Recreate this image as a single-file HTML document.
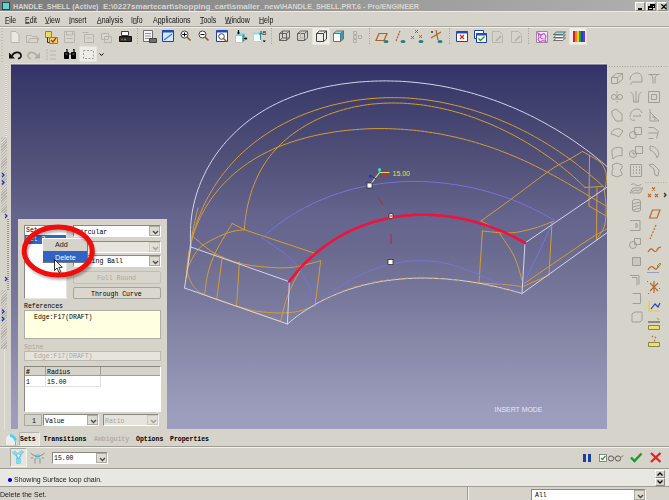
<!DOCTYPE html>
<html><head><meta charset="utf-8">
<style>
*{margin:0;padding:0;box-sizing:border-box}
html,body{width:669px;height:500px;overflow:hidden;background:#d6d3ca}
body{position:relative;font-family:"Liberation Sans",sans-serif;color:#000}
.a{position:absolute}
.t{position:absolute;white-space:nowrap;line-height:1}
.mono{font-family:"Liberation Mono",monospace;font-size:6.5px;margin-top:1px}
#title{left:0;top:0;width:669px;height:11px;background:linear-gradient(to right,#7c7c7c,#9a9a9a 55%,#b0b0b0)}
#gfx{left:11px;top:64px;width:596px;height:365px;background:linear-gradient(rgb(50,50,104) 0px,rgb(57,57,106) 16px,rgb(82,82,122) 101px,rgb(92,92,132) 131px,rgb(100,100,142) 151px,rgb(106,106,144) 186px,rgb(114,114,150) 211px,rgb(122,122,158) 241px,rgb(130,130,164) 261px,rgb(136,136,168) 281px,rgb(142,142,176) 303px,rgb(148,148,180) 321px,rgb(156,156,188) 348px,rgb(157,157,190) 365px)}
u{text-underline-offset:0px;text-decoration-thickness:0.8px;text-decoration-color:#666}
.menu span{position:absolute;top:15.3px;font-size:8.8px;line-height:10px;color:#101010;transform-origin:0 0;transform:scaleX(.79)}
.sunk{border-top:1px solid #8a8880;border-left:1px solid #8a8880;border-bottom:1px solid #fff;border-right:1px solid #fff}
.raised{border-top:1px solid #fff;border-left:1px solid #fff;border-bottom:1px solid #8a8880;border-right:1px solid #8a8880}
.dd{position:absolute;top:0;right:0;bottom:0;width:11px;background:#dedbd2;border:1px solid #aeaba2}

</style></head><body>

<!-- title bar -->
<div class="a" id="title"></div>
<div class="a" style="left:2px;top:2px;width:8px;height:8px;background:#5ad6d6;border:1px solid #2a4848"></div>
<svg class="a" style="left:0;top:0" width="430" height="12" viewBox="0 0 430 12"><g font-family="Liberation Sans" font-weight="bold" font-size="8" fill="#d8d6d0" lengthAdjust="spacingAndGlyphs">
<text x="13" y="8.7" textLength="85.5" lengthAdjust="spacingAndGlyphs">HANDLE_SHELL (Active)</text>
<text x="103" y="8.7" textLength="179" lengthAdjust="spacingAndGlyphs">E:\0227smartecart\shopping_cart\smaller_new\</text>
<text x="282" y="8.7" textLength="137" lengthAdjust="spacingAndGlyphs">HANDLE_SHELL.PRT.6 - Pro/ENGINEER</text>
</g></svg>
<div class="a raised" style="left:635px;top:2px;width:10px;height:9px;background:#d6d3ca"><div class="a" style="left:2px;top:5px;width:4px;height:1.5px;background:#000"></div></div>
<div class="a raised" style="left:646px;top:2px;width:10px;height:9px;background:#d6d3ca"><div class="a" style="left:3px;top:1px;width:5px;height:4px;border:1px solid #000;border-top-width:2px"></div><div class="a" style="left:1px;top:3px;width:5px;height:4px;border:1px solid #000;border-top-width:2px;background:#d6d3ca"></div></div>
<div class="a raised" style="left:657px;top:2px;width:10px;height:9px;background:#d6d3ca"><div class="t" style="left:1.5px;top:0px;font-size:9px;font-weight:bold">&#x2715;</div></div>
<div class="a" style="left:0;top:11px;width:669px;height:1px;background:#ecebe4"></div>

<!-- menu bar -->
<div class="menu">
<span style="left:5px"><u>F</u>ile</span>
<span style="left:25px"><u>E</u>dit</span>
<span style="left:45px"><u>V</u>iew</span>
<span style="left:69px"><u>I</u>nsert</span>
<span style="left:97px"><u>A</u>nalysis</span>
<span style="left:131px">I<u>n</u>fo</span>
<span style="left:153px">A<u>p</u>plications</span>
<span style="left:200px"><u>T</u>ools</span>
<span style="left:225px"><u>W</u>indow</span>
<span style="left:259px"><u>H</u>elp</span>
</div>
<div class="a" style="left:0;top:26px;width:669px;height:1px;background:#a8a69e"></div>
<div class="a" style="left:0;top:27px;width:669px;height:1px;background:#eeede8"></div>


<!-- toolbars -->
<div class="a" style="left:569px;top:27px;width:18px;height:18px;background:#eeede6;border:1px solid #e4e2da;border-radius:1px"></div>
<div class="a" style="left:312px;top:27px;width:18px;height:18px;background:#eeede6;border:1px solid #e4e2da;border-radius:1px"></div>
<div class="a" style="left:79px;top:46px;width:18px;height:16px;background:#eeede6;border:1px solid #e4e2da;border-radius:1px"></div>
<svg class="a" style="left:0;top:26px" width="669" height="38" viewBox="0 26 669 38">
<g fill="none" stroke-width="1">
 <!-- grippers -->
 <path d="M2 28V62" stroke="#a8a69e" stroke-dasharray="1 2"/>
 <path d="M137.5 28V45M271.5 28V45M369.5 28V45M449.5 28V45M528.5 28V45" stroke="#a09e96" stroke-dasharray="1 1.5"/>
 <!-- new doc -->
 <path d="M11 31.5h5l3 3v8h-8z" stroke="#b6b4ac" fill="#e8e7e0"/>
 <!-- open -->
 <path d="M26.5 35.5h5l1 1h5v6h-11z" stroke="#b6b4ac" fill="#d8d6cc"/><path d="M28 42.5l2-4h9l-2 4" stroke="#b6b4ac"/>
 <!-- folder check -->
 <path d="M45.5 31.5h6v6h-6z" fill="#f0d860" stroke="#a08020"/><path d="M49.5 37.5h8v6h-8z" fill="#f0d860" stroke="#a08020"/><path d="M51 40l2 2 3-4" stroke="#e02020" stroke-width="1.3"/><path d="M47.5 37.5v5h2" stroke="#303030"/>
 <!-- save -->
 <path d="M64.5 31.5h10v11h-10z" stroke="#b6b4ac" fill="#d8d6cc"/><path d="M66.5 32v3h6v-3M66.5 38.5h6" stroke="#b6b4ac"/>
 <path d="M84.5 34.5h9v8h-9zM82.5 32.5h6" stroke="#b6b4ac" fill="#d8d6cc"/><path d="M86.5 38h5" stroke="#b6b4ac"/>
 <path d="M101.5 33.5h7v6h-7zM104.5 36.5h7v6h-7z" stroke="#b6b4ac" fill="#d8d6cc"/>
 <!-- printer -->
 <path d="M121.5 31.5h7v4h-7z" fill="#fff" stroke="#404040"/><path d="M119.5 36.5h12v5h-12z" fill="#303030" stroke="#101010"/><path d="M121 39.5h2" stroke="#e03030" stroke-width="1.3"/><path d="M124 39.5h2" stroke="#30b030" stroke-width="1.3"/>
 <!-- table camera -->
 <path d="M143.5 30.5h9v11h-9z" fill="#f4f4f4" stroke="#707070"/><path d="M145 33.5h6M145 36h6M145 38.5h6" stroke="#909090"/><path d="M149.5 38.5h7v4h-7z" fill="#707070" stroke="#404040"/>
 <!-- blue window -->
 <path d="M162.5 30.5h11v11h-11z" fill="#d8e8ff" stroke="#2040a0"/><path d="M162.5 31.5h11" stroke="#2050c0" stroke-width="2"/><path d="M164 40l8-6" stroke="#4080e0" stroke-width="1.5"/>
 <!-- zoom in/out -->
 <circle cx="184.5" cy="34.5" r="3.5" fill="#fff" stroke="#404040"/><path d="M187 37l3.5 3.5" stroke="#a05020" stroke-width="1.6"/><path d="M182.5 34.5h4M184.5 32.5v4" stroke="#000"/>
 <circle cx="202.5" cy="34.5" r="3.5" fill="#fff" stroke="#404040"/><path d="M205 37l3.5 3.5" stroke="#a05020" stroke-width="1.6"/><path d="M182.5 34.5h4M200.5 34.5h4" stroke="#000"/>
 <!-- refit -->
 <path d="M216.5 30.5h11v11h-11z" fill="#fff" stroke="#2040a0"/><path d="M216.5 31.5h11" stroke="#2050c0" stroke-width="2"/><circle cx="221.5" cy="36.5" r="2.8" stroke="#404040"/><path d="M223.5 38.5l3 3" stroke="#a05020" stroke-width="1.4"/>
 <!-- reorient -->
 <path d="M235.5 35.5h7v7h-7z" fill="#fff" stroke="#b0b0b0" stroke-width=".6"/><path d="M235.5 35.5l2-2h7l-2 2z" fill="#60d8e8"/><path d="M242.5 35.5l2-2v7l-2 2z" fill="#20a0a8"/><path d="M238.5 30v3" stroke="#000" stroke-width="1.2"/><path d="M236.8 32.5h3.4l-1.7 2z" fill="#000"/><path d="M244 38.5h2" stroke="#000" stroke-width="1.2"/><path d="M245.5 36.8v3.4l2-1.7z" fill="#000"/>
 <!-- AB -->
 <path d="M253.5 32.5h8v9h-8z" fill="#fff" stroke="#b8b8b8" stroke-width=".6"/><path d="M253.5 32.5h8v2h-8z" fill="#80e0ee"/><path d="M260.5 34v6" stroke="#20a0a8" stroke-width="1"/><text x="259.2" y="34.8" font-size="6" font-family="Liberation Sans" fill="#202020" textLength="7" lengthAdjust="spacingAndGlyphs">AB</text><path d="M262.5 40.5h3.4l-1.7 1.8z" fill="#000"/>
 <!-- cubes -->
 <path d="M279.5 33.5h7v7h-7zM279.5 33.5l3-2.5h7v7l-3 2.5M286.5 33.5l3-2.5M282.5 31v7h7M279.5 40.5l3-2.5" stroke="#606060"/>
 <path d="M297.5 33.5h7v7h-7zM297.5 33.5l3-2.5h7v7l-3 2.5M304.5 33.5l3-2.5" stroke="#606060"/><path d="M300.5 31v7h7M297.5 40.5l3-2.5" stroke="#b0aea6"/>
 <path d="M316.5 33.5h7v8h-7zM316.5 33.5l3-2.5h7v8l-3 2.5M323.5 33.5l3-2.5" stroke="#404040"/>
 <path d="M333.5 33.5h7v8h-7z" fill="#fff" stroke="#707070"/><path d="M333.5 33.5l3-2.5h7l-3 2.5z" fill="#80e0f0" stroke="#707070"/><path d="M340.5 33.5l3-2.5v8l-3 2.5z" fill="#30a0c0" stroke="#707070"/>
 <!-- model tree -->
 <path d="M353.5 31.5h3v3h-3zM353.5 35.5h3v3h-3zM353.5 39.5h3v3h-3zM358.5 35.5h3v3h-3z" stroke="#b0aea6"/>
 <!-- datum -->
 <path d="M376 40.5l3-7h8l-3 7z" stroke="#b06020" stroke-width="1.2"/><ellipse cx="386" cy="41.5" rx="2.5" ry="1.6" fill="#208080"/>
 <path d="M396 41l4-10" stroke="#b06020" stroke-width="1.2" stroke-dasharray="2 1"/><ellipse cx="403" cy="41.5" rx="2.5" ry="1.6" fill="#208080"/>
 <path d="M415 30l3 3M418 30l-3 3M411 36l3 3M414 36l-3 3M419 35l3 3M422 35l-3 3" stroke="#b06020" stroke-width="1"/><ellipse cx="421" cy="41.5" rx="2.5" ry="1.6" fill="#208080"/>
 <path d="M431 38l10-6M436 30l2 10" stroke="#b06020" stroke-width="1.2"/><path d="M431 31l2 2M433 31l-2 2" stroke="#606060"/><ellipse cx="440" cy="41.5" rx="2.5" ry="1.6" fill="#208080"/>
 <!-- windows -->
 <path d="M456.5 31.5h11v10h-11z" fill="#fff" stroke="#2040a0"/><path d="M456.5 32.5h11" stroke="#2050c0" stroke-width="2"/><path d="M460 35l4 4M464 35l-4 4" stroke="#e02020" stroke-width="1.2"/>
 <path d="M474.5 30.5h9v8h-9z" fill="#fff" stroke="#2040a0"/><path d="M476.5 33.5h10v9h-10z" fill="#fff" stroke="#2040a0"/><path d="M476.5 34.5h10" stroke="#2050c0" stroke-width="2"/><path d="M478.5 38.5l2 2 4-4" stroke="#20a020" stroke-width="1.4"/>
 <path d="M492.5 31.5h7l3 3v8h-10z" stroke="#b8b6ae"/><path d="M496 41l5-5" stroke="#b8b6ae" stroke-width="2"/>
 <path d="M511.5 31.5h7l3 3v8h-10z" stroke="#b8b6ae"/><path d="M515 41l5-5" stroke="#b8b6ae" stroke-width="2"/>
 <!-- pink -->
 <path d="M536.5 31.5h11v11h-11z" fill="#f8f0f8" stroke="#909090"/><path d="M538 33l3 2 3-1.5 2 2.5-1 3 1 2.5-3-1-3 1.5-2-2.5 1-2z" stroke="#d040e0" stroke-width="1.1" fill="none"/><path d="M541 35l-.5 3 3 1" stroke="#d040e0" stroke-width="1" fill="none"/>
 <!-- layers -->
 <path d="M553.5 40.5l3-2.5h9l-3 2.5z" fill="#fff" stroke="#505050" stroke-width=".8"/><path d="M553.5 37.5l3-2.5h9l-3 2.5z" fill="#fff" stroke="#505050" stroke-width=".8"/><path d="M553.5 34.5l3-2.5h9l-3 2.5z" fill="#90e8f4" stroke="#505050" stroke-width=".8"/>
 <!-- rainbow -->
 <rect x="573" y="31" width="2" height="11" fill="#d02020"/><rect x="575" y="31" width="2" height="11" fill="#f08020"/><rect x="577" y="31" width="2" height="11" fill="#e0d020"/><rect x="579" y="31" width="2" height="11" fill="#20a030"/><rect x="581" y="31" width="2" height="11" fill="#2040d0"/><rect x="583" y="31" width="2" height="11" fill="#8030c0"/>
 <!-- row 2 -->
 <path d="M12 56C13.5 51.8 19.8 51 21 55c.5 2-1 3.5-3 3.7" stroke="#101010" stroke-width="1.7"/><path d="M9 52.5v6h6z" fill="#101010"/>
 <path d="M37 56C35.5 51.8 29.2 51 28 55c-.5 2 1 3.5 3 3.7" stroke="#aeaca4" stroke-width="1.5"/><path d="M40 52.5v6h-6z" fill="#aeaca4"/>
 <path d="M46 50h2M46 53h2M46 56h2M46 59h2M50 51h6M50 55h6M50 59h6" stroke="#b6b4ac"/>
 <path d="M64.5 52.5h4v6h-4zM71.5 52.5h4v6h-4z" fill="#000" stroke="#000"/><path d="M66 49.5h1v3M73 49.5h1v3M68.5 54h3" stroke="#000" stroke-width="1.2"/><path d="M65.5 54h2M72.5 54h2" stroke="#8090b0"/>
 <path d="M83.5 50.5h10v8h-10z" stroke="#a0a098" stroke-dasharray="2 1.5"/>
 <path d="M99.5 53.5l2 2 2-2" stroke="#000"/>
</g>
</svg>

<!-- graphics area -->
<div class="a" id="gfx"></div>
<div class="a" style="left:11px;top:63px;width:596px;height:1px;background:#e2e0d6"></div>
<div class="a" style="left:11px;top:64px;width:596px;height:1px;background:#8886a4"></div>
<div class="a" style="left:11px;top:65px;width:596px;height:1px;background:#2c2c62"></div>
<!-- model -->
<svg class="a" style="left:0;top:0" width="669" height="500" viewBox="0 0 669 500">
<defs><clipPath id="gclip"><rect x="11" y="65" width="596" height="364"/></clipPath></defs><g clip-path="url(#gclip)">
<g fill="none" stroke-linecap="round" stroke-linejoin="round">
<g stroke="#d69c34" stroke-width="1">
<path d="M188.0 268.0L188.3 263.7L188.7 259.5L189.2 255.2L189.8 251.0L190.5 246.9L191.3 242.8L192.2 238.7L193.2 234.7L194.3 230.7L195.5 226.7L196.8 222.8L198.2 219.0L199.6 215.2L201.2 211.4L202.8 207.7L204.5 204.0L206.3 200.4L208.2 196.8L210.2 193.3L212.2 189.9L214.3 186.5L216.5 183.1L218.8 179.8L221.1 176.6L223.5 173.4L226.0 170.3L228.6 167.2L231.2 164.2L233.9 161.3L236.6 158.4L239.5 155.6L242.3 152.8L245.3 150.2L248.3 147.5L251.3 145.0L254.4 142.5L257.6 140.1L260.8 137.8L264.1 135.5L267.4 133.3L270.8 131.1L274.2 129.0L277.6 127.0L281.1 125.1L284.7 123.2L288.2 121.4L291.9 119.6L295.5 117.9L299.2 116.3L302.9 114.8L306.7 113.3L310.5 111.9L314.3 110.5L318.2 109.3L322.0 108.0L325.9 106.9L329.8 105.8L333.8 104.8L337.7 103.9L341.7 103.0L345.7 102.2L349.7 101.4L353.8 100.7L357.8 100.1L361.8 99.6L365.9 99.1L370.0 98.7L374.0 98.4L378.1 98.1L382.2 97.9L386.3 97.7L390.3 97.7L394.4 97.7L398.5 97.7L402.5 97.8L406.6 98.0L410.7 98.3L414.7 98.6L418.8 99.0L422.8 99.4L426.8 99.9L430.9 100.5L434.9 101.2L438.9 101.8L442.9 102.6L446.9 103.4L450.8 104.3L454.8 105.2L458.8 106.2L462.7 107.2L466.6 108.3L470.5 109.4L474.4 110.6L478.3 111.9L482.2 113.2L486.0 114.5L489.9 115.9L493.7 117.4L497.5 118.9L501.3 120.5L505.0 122.1L508.8 123.7L512.5 125.4L516.2 127.2L519.9 128.9L523.5 130.8L527.2 132.6L530.8 134.6L534.4 136.5L537.9 138.5L541.5 140.6L545.0 142.7L548.5 144.8L551.9 146.9L555.3 149.1L558.7 151.4L562.1 153.7L565.5 156.0L568.8 158.3L572.1 160.7L575.3 163.1L578.5 165.6L581.7 168.1L584.9 170.6L588.0 173.1L591.1 175.7L594.1 178.3L597.2 180.9L600.1 183.6L603.1 186.3L606.0 189.0"/>
<path d="M244.4 228.8L244.7 224.7L245.2 220.5L245.7 216.4L246.4 212.3L247.1 208.2L248.0 204.1L249.0 200.1L250.1 196.1L251.3 192.2L252.6 188.3L254.1 184.4L255.6 180.7L257.3 177.0L259.1 173.3L261.0 169.7L263.0 166.3L265.2 162.8L267.4 159.5L269.8 156.3L272.4 153.2L275.0 150.2L277.7 147.2L280.6 144.4L283.5 141.6L286.5 139.0L289.6 136.4L292.8 134.0L296.1 131.6L299.5 129.3L302.9 127.2L306.4 125.1L309.9 123.1L313.5 121.2L317.2 119.4L320.9 117.7L324.6 116.1L328.4 114.6L332.2 113.2L336.0 111.9L339.8 110.7L343.7 109.6L347.6 108.5L351.5 107.6L355.4 106.7L359.3 106.0L363.3 105.3L367.2 104.7L371.2 104.2L375.2 103.8L379.2 103.5L383.2 103.2L387.2 103.1L391.2 103.0L395.3 103.0L399.3 103.1L403.3 103.2L407.4 103.5L411.4 103.8L415.5 104.2L419.5 104.6L423.5 105.1L427.6 105.8L431.6 106.4L435.6 107.2L439.7 108.0L443.7 108.9L447.7 109.8L451.7 110.8L455.7 111.9L459.6 113.0L463.6 114.2L467.5 115.5L471.5 116.8L475.4 118.2L479.3 119.7L483.1 121.2L487.0 122.7L490.8 124.3L494.6 126.0L498.4 127.7L502.2 129.5L505.9 131.3L509.6 133.2L513.3 135.1L517.0 137.1L520.6 139.1L524.2 141.1L527.8 143.2L531.3 145.4L534.8 147.6L538.2 149.8L541.7 152.1L545.0 154.4L548.4 156.7L551.7 159.1L554.9 161.5L558.2 164.0L561.3 166.5L564.5 169.0L567.5 171.6L570.6 174.1L573.6 176.8L576.5 179.4L579.4 182.1L582.2 184.8L585.0 187.5"/>
<path d="M585.0 187.5L602.0 186.5"/>
<path d="M187.0 272.0L187.2 267.8L187.4 263.6L187.9 259.4L188.4 255.3L189.1 251.2L189.9 247.2L190.8 243.2L191.9 239.3L193.1 235.4L194.4 231.5L195.8 227.7L197.3 224.0L198.9 220.3L200.7 216.7L202.5 213.1L204.5 209.6L206.5 206.1L208.7 202.8L210.9 199.4L213.2 196.2L215.7 193.0L218.2 189.9L220.8 186.9L223.5 183.9L226.3 181.1L229.1 178.3L232.0 175.5L235.0 172.9L238.1 170.4L241.3 167.9L244.5 165.5L247.7 163.3L251.1 161.1L254.5 158.9L257.9 156.9L261.4 155.0L265.0 153.1L268.6 151.3L272.2 149.6L275.9 147.9L279.7 146.4L283.5 144.9L287.3 143.5L291.1 142.2L295.0 140.9L299.0 139.7L302.9 138.6L306.9 137.5L310.9 136.5L314.9 135.6L318.9 134.7L323.0 133.9L327.0 133.2L331.1 132.5L335.2 131.8L339.3 131.3L343.4 130.8L347.5 130.3L351.6 129.9L355.7 129.6L359.7 129.3L363.8 129.0L367.9 128.8L372.0 128.7L376.0 128.6L380.1 128.6L384.2 128.6L388.2 128.7L392.3 128.8L396.3 129.0L400.3 129.2L404.4 129.4L408.4 129.8L412.4 130.1L416.4 130.5L420.4 131.0L424.4 131.5L428.4 132.1L432.4 132.7L436.3 133.3L440.3 134.0L444.2 134.8L448.2 135.6L452.1 136.4L456.0 137.3L459.9 138.3L463.8 139.2L467.7 140.3L471.6 141.3L475.4 142.4L479.3 143.6L483.1 144.8L486.9 146.0L490.8 147.3L494.6 148.7L498.4 150.0L502.1 151.5L505.9 152.9L509.6 154.4L513.4 156.0L517.1 157.5L520.8 159.2L524.5 160.8L528.2 162.5L531.8 164.3L535.5 166.1L539.1 167.9L542.7 169.7L546.3 171.6L549.9 173.5L553.5 175.5L557.1 177.4L560.6 179.4L564.2 181.4L567.7 183.4L571.2 185.5L574.7 187.5L578.2 189.6L581.7 191.6L585.2 193.7L588.7 195.8L592.2 197.8L595.6 199.9L599.1 201.9L602.5 204.0L606.0 206.0"/>
<path d="M232.2 223.5L244.7 229.8"/>
<path d="M198.0 208.0C197.2 211.7 194.7 221.3 193.0 230.0C191.3 238.7 189.1 252.0 188.0 260.0C186.9 268.0 186.8 275.0 186.5 278.0"/>
<path d="M244.7 229.8L314.0 253.0"/>
<path d="M232.2 223.5C229.5 228.2 220.0 243.2 216.0 251.4C212.0 259.6 209.9 265.7 208.0 273.0C206.1 280.3 205.1 291.3 204.5 295.0"/>
<path d="M187.0 269.0C188.8 265.8 193.5 254.6 198.0 249.6C202.5 244.6 208.3 241.8 214.0 238.8C219.7 235.8 226.8 233.1 232.0 231.6C237.2 230.1 242.8 230.1 245.0 229.8"/>
<path d="M193.5 237.0C196.9 239.7 206.4 248.7 214.0 253.0C221.6 257.3 230.5 260.7 239.0 263.0C247.5 265.3 256.2 266.3 265.0 267.0C273.8 267.7 282.7 268.4 292.0 267.4C301.3 266.4 315.9 261.9 320.7 260.8"/>
<path d="M320.7 260.8L315.0 306.0"/>
<path d="M314.0 253.0C311.7 256.0 304.4 263.7 300.0 270.8C295.6 277.9 290.9 287.4 287.6 295.9C284.3 304.4 281.6 317.6 280.4 321.9"/>
<path d="M187.0 271.0C187.8 273.2 189.3 280.2 192.0 284.0C194.7 287.8 195.5 290.2 203.0 294.0C210.5 297.8 224.2 302.1 237.0 306.6C249.8 311.1 272.8 318.6 280.0 321.0"/>
<path d="M237.0 306.0C240.1 306.8 248.1 309.8 255.3 311.0C262.5 312.2 272.9 313.0 280.4 313.0C287.8 313.0 294.4 312.2 300.0 311.0C305.6 309.8 311.7 306.8 314.0 306.0"/>
<path d="M222.3 256.8L216.8 298.6"/>
<path d="M239.4 262.0L236.5 306.6"/>
<path d="M481.0 221.0C485.8 217.5 498.4 208.5 510.0 200.0C521.6 191.5 540.6 176.8 550.4 170.0C560.2 163.2 563.6 162.6 569.0 159.5C574.4 156.4 580.2 152.8 582.5 151.5"/>
<path d="M582.5 151.5L589.5 155.5"/>
<path d="M481.0 221.0L498.0 230.0"/>
<path d="M482.4 231.0C487.0 231.3 501.2 233.5 510.0 233.0C518.8 232.5 527.7 230.0 535.0 228.0C542.3 226.0 550.8 222.2 554.0 221.0"/>
<path d="M482.4 231.0L479.0 283.0"/>
<path d="M500.0 234.0C502.3 237.7 510.3 248.3 514.0 256.0C517.7 263.7 520.7 276.0 522.0 280.0"/>
<path d="M552.0 222.0L549.0 275.0"/>
<path d="M522.0 287.0L549.0 275.0"/>
<path d="M522.0 285.0C533.0 277.5 573.8 249.3 588.0 240.0C602.2 230.7 603.8 230.8 607.0 229.0"/>
<path d="M479.0 283.0C484.2 283.3 502.8 284.3 510.0 285.0C517.2 285.7 520.0 286.7 522.0 287.0"/>
<path d="M589.5 155.0L589.0 206.0"/>
<path d="M589.0 206.0L606.0 216.0"/>
<path d="M597.0 188.0L596.5 240.0"/>
<path d="M589.5 155.5C591.2 156.6 597.4 159.6 600.0 162.0C602.6 164.4 603.9 167.3 605.0 170.0C606.1 172.7 606.4 175.2 606.5 178.0C606.6 180.8 605.7 185.5 605.5 187.0"/>
<path d="M604.0 188.0C604.3 191.0 605.9 199.7 606.0 206.0C606.1 212.3 606.2 220.3 604.5 226.0C602.8 231.7 597.4 237.7 596.0 240.0"/>
</g><g stroke="#7474dc" stroke-width="1">
<path d="M262.0 238.0L265.1 235.2L268.3 232.5L271.4 229.8L274.7 227.2L278.0 224.7L281.3 222.3L284.6 219.9L288.0 217.6L291.4 215.4L294.9 213.3L298.4 211.2L301.9 209.2L305.5 207.3L309.1 205.5L312.7 203.7L316.4 202.0L320.0 200.3L323.8 198.8L327.5 197.3L331.3 195.8L335.0 194.5L338.8 193.2L342.7 192.0L346.5 190.8L350.4 189.7L354.3 188.7L358.2 187.8L362.1 186.9L366.1 186.1L370.0 185.3L374.0 184.7L378.0 184.1L382.0 183.5L386.0 183.0L390.0 182.6L394.0 182.3L398.1 182.0L402.1 181.7L406.2 181.6L410.2 181.5L414.3 181.5L418.3 181.5L422.4 181.6L426.4 181.7L430.5 182.0L434.6 182.2L438.6 182.6L442.7 183.0L446.7 183.5L450.7 184.0L454.8 184.6L458.8 185.2L462.8 185.9L466.8 186.7L470.8 187.5L474.8 188.4L478.8 189.3L482.8 190.3L486.7 191.4L490.6 192.5L494.5 193.7L498.4 194.9L502.3 196.2L506.2 197.5L510.0 198.9L513.8 200.4L517.6 201.9L521.4 203.5L525.1 205.1L528.8 206.8L532.5 208.5L536.2 210.3L539.8 212.1L543.4 214.0L547.0 216.0L550.5 218.0L554.0 220.0"/>
<path d="M262.0 238.0C265.8 240.7 278.9 249.0 285.0 254.0C291.1 259.0 294.4 262.0 298.6 268.0C302.9 274.0 307.8 283.7 310.5 290.0C313.2 296.3 314.2 303.3 315.0 306.0"/>
<path d="M315.0 306.0L318.1 303.2L321.2 300.5L324.4 297.9L327.6 295.3L330.9 292.8L334.3 290.4L337.7 288.0L341.1 285.8L344.6 283.6L348.2 281.5L351.8 279.5L355.4 277.5L359.1 275.7L362.8 274.0L366.5 272.3L370.3 270.8L374.1 269.3L377.9 268.0L381.7 266.7L385.6 265.6L389.5 264.6L393.4 263.7L397.3 262.9L401.3 262.2L405.2 261.7L409.2 261.2L413.2 260.9L417.2 260.7L421.1 260.7L425.1 260.7L429.1 261.0L433.1 261.3L437.1 261.8L441.1 262.4L445.1 263.2L449.0 264.1L453.0 265.1L456.9 266.3L460.9 267.6L464.8 269.1L468.7 270.6L472.6 272.1L476.5 273.8L480.3 275.4L484.2 277.1L488.0 278.8L491.9 280.5L495.7 282.2L499.5 283.8L503.3 285.4L507.0 286.9L510.8 288.4L514.5 289.7L518.3 290.9L522.0 292.0"/>
<path d="M554.0 220.0L522.0 288.0"/>
</g><g stroke="#d4d4ec" stroke-width="1">
<path d="M190.8 247.0L190.5 242.6L190.4 238.3L190.4 234.0L190.5 229.7L190.7 225.4L191.1 221.2L191.5 217.1L192.1 213.0L192.8 208.9L193.7 204.9L194.6 200.9L195.7 197.0L196.8 193.1L198.1 189.3L199.5 185.5L201.0 181.8L202.6 178.2L204.3 174.6L206.0 171.0L207.9 167.5L209.9 164.1L211.9 160.7L214.1 157.4L216.3 154.1L218.6 150.9L221.1 147.8L223.5 144.7L226.1 141.7L228.8 138.8L231.5 136.0L234.3 133.2L237.1 130.4L240.1 127.8L243.1 125.2L246.1 122.7L249.2 120.3L252.4 117.9L255.7 115.7L259.0 113.5L262.3 111.4L265.7 109.3L269.2 107.4L272.7 105.5L276.3 103.7L279.9 102.0L283.5 100.3L287.2 98.8L290.9 97.3L294.7 95.8L298.5 94.5L302.3 93.2L306.2 92.0L310.1 90.8L314.0 89.8L317.9 88.7L321.9 87.8L325.8 86.9L329.8 86.1L333.8 85.4L337.9 84.7L341.9 84.0L346.0 83.5L350.0 83.0L354.1 82.5L358.1 82.1L362.2 81.8L366.3 81.5L370.3 81.3L374.4 81.1L378.5 81.0L382.5 80.9L386.6 80.9L390.7 81.0L394.7 81.1L398.8 81.2L402.8 81.4L406.8 81.7L410.9 82.0L414.9 82.4L418.9 82.8L423.0 83.3L427.0 83.8L431.0 84.3L435.0 85.0L438.9 85.6L442.9 86.3L446.9 87.1L450.8 87.9L454.8 88.8L458.7 89.7L462.6 90.7L466.6 91.7L470.5 92.7L474.3 93.8L478.2 95.0L482.1 96.2L485.9 97.4L489.7 98.7L493.6 100.0L497.3 101.4L501.1 102.8L504.9 104.3L508.6 105.8L512.4 107.3L516.1 108.9L519.8 110.6L523.4 112.2L527.1 114.0L530.7 115.7L534.3 117.5L537.9 119.4L541.5 121.3L545.0 123.2L548.5 125.2L552.0 127.2L555.5 129.2L559.0 131.3L562.4 133.4L565.8 135.6L569.2 137.8L572.5 140.0L575.8 142.3L579.1 144.6L582.4 146.9L585.6 149.3L588.9 151.7L592.0 154.2L595.2 156.7L598.3 159.2L601.4 161.8L604.5 164.4L607.5 167.0"/>
<path d="M190.8 247.0L184.5 288.0"/>
<path d="M190.8 247.0L289.4 281.7"/>
<path d="M184.5 288.0L287.4 324.0"/>
<path d="M289.4 281.7L287.4 324.0"/>
<path d="M287.4 324.0L290.7 321.3L294.0 318.6L297.3 316.1L300.7 313.6L304.2 311.3L307.6 309.0L311.2 306.8L314.7 304.7L318.3 302.7L321.9 300.8L325.6 299.0L329.3 297.2L333.0 295.6L336.8 294.0L340.5 292.5L344.3 291.1L348.2 289.7L352.0 288.5L355.9 287.3L359.8 286.2L363.8 285.1L367.7 284.2L371.7 283.3L375.7 282.5L379.7 281.7L383.7 281.1L387.8 280.5L391.8 280.0L395.9 279.5L400.0 279.1L404.0 278.8L408.1 278.5L412.2 278.3L416.4 278.2L420.5 278.1L424.6 278.1L428.7 278.2L432.9 278.3L437.0 278.4L441.1 278.7L445.3 278.9L449.4 279.3L453.5 279.7L457.6 280.1L461.7 280.6L465.9 281.1L470.0 281.7L474.0 282.4L478.1 283.1L482.2 283.8L486.3 284.6L490.3 285.4L494.3 286.3L498.3 287.2L502.3 288.2L506.3 289.2L510.3 290.2L514.2 291.3L518.1 292.4L522.0 293.6"/>
<path d="M525.0 243.0L522.0 293.6"/>
<path d="M525.0 243.0L608.0 186.5"/>
<path d="M522.0 293.6L608.0 232.0"/>
</g>
<path d="M314.0 306.0L317.6 303.7L321.2 301.6L324.9 299.5L328.6 297.6L332.3 295.8L336.1 294.0L339.9 292.4L343.7 290.9L347.6 289.4L351.4 288.1L355.3 286.8L359.3 285.6L363.2 284.6L367.2 283.6L371.2 282.7L375.2 281.9L379.2 281.1L383.2 280.5L387.3 279.9L391.3 279.4L395.4 279.0L399.5 278.6L403.6 278.3L407.7 278.1L411.8 278.0L416.0 277.9L420.1 277.9L424.3 278.0L428.4 278.1L432.5 278.2L436.7 278.5L440.8 278.8L445.0 279.1L449.1 279.5L453.3 279.9L457.4 280.4L461.5 281.0L465.6 281.6L469.8 282.2L473.9 282.9L478.0 283.6L482.1 284.3L486.1 285.1L490.2 286.0L494.2 286.8L498.2 287.7L502.3 288.6L506.2 289.6L510.2 290.5L514.2 291.5L518.1 292.6L522.0 293.6" stroke="#d69c34" stroke-width="1.1" stroke-dasharray="1.5 5"/>
<path d="M289.3 281.5L291.9 278.1L294.5 274.8L297.2 271.6L300.0 268.4L302.8 265.4L305.7 262.4L308.7 259.5L311.8 256.7L314.9 254.0L318.0 251.4L321.3 248.8L324.5 246.4L327.9 244.0L331.2 241.7L334.7 239.5L338.1 237.4L341.7 235.4L345.2 233.5L348.9 231.7L352.5 229.9L356.2 228.3L359.9 226.7L363.7 225.3L367.5 223.9L371.3 222.6L375.2 221.5L379.1 220.4L383.0 219.4L386.9 218.5L390.9 217.7L394.8 217.0L398.8 216.4L402.8 215.9L406.9 215.5L410.9 215.2L414.9 214.9L419.0 214.8L423.1 214.8L427.1 214.8L431.2 214.9L435.3 215.2L439.3 215.5L443.4 215.9L447.5 216.3L451.5 216.9L455.6 217.5L459.6 218.3L463.7 219.1L467.7 220.0L471.7 221.0L475.7 222.1L479.6 223.2L483.6 224.4L487.5 225.7L491.4 227.1L495.2 228.6L499.1 230.1L502.9 231.7L506.7 233.4L510.4 235.2L514.1 237.0L517.8 239.0L521.4 241.0L525.0 243.0" stroke="#f0123a" stroke-width="2.6"/>
</g>
<g>
 <path d="M372 189l1 1M378 197l5 8M391 234v10" stroke="#c02040" stroke-width="1" fill="none"/>
 <path d="M369.5 185.5l10-13M379.5 172.5h10" stroke="#e8e040" stroke-width="1.2" fill="none"/>
 <path d="M379.5 172.5v-3" stroke="#30e0e0" stroke-width="1.5"/><circle cx="379.5" cy="169.5" r="1.6" fill="#30e0e0"/>
 <circle cx="370.5" cy="176" r="1.6" fill="#2030e0"/><path d="M370.5 176l6 3" stroke="#2030e0" stroke-width="1"/>
 <circle cx="385.5" cy="175" r="1.4" fill="#e02040"/><path d="M385.5 175l-4 4" stroke="#e02040" stroke-width="1"/>
 <rect x="367" y="183" width="5" height="5" fill="#fff" stroke="#303030" stroke-width=".8"/>
 <rect x="388" y="259.5" width="5" height="5" fill="#fff" stroke="#303030" stroke-width=".8"/>
 <circle cx="391" cy="216" r="2.6" fill="#fff" stroke="#202020" stroke-width=".8"/><path d="M388.5 216h5" stroke="#e02040" stroke-width="1.2"/>
 <text x="392.5" y="175.7" font-family="Liberation Sans" font-size="7" fill="#e8e040">15.00</text>
 <text x="494.5" y="411.8" font-family="Liberation Sans" font-size="7.2" fill="#e8e8f0" textLength="48" lengthAdjust="spacingAndGlyphs">INSERT MODE</text>
</g>
</g></svg>
<!-- /model -->




<!-- right toolbar -->
<svg class="a" style="left:607px;top:64px" width="62" height="300" viewBox="607 64 62 300">
<g fill="none" stroke="#9a988f" stroke-width=".9">
 <path d="M609 66.5H668" stroke="#9a988f" stroke-dasharray="1 1.6"/>
 <!-- row1 -->
 <path d="M611.5 77.5h6v6h-6zM611.5 77.5l5-4h6v6l-5 4M617.5 77.5l5-4"/>
 <path d="M630 80c0-5 4-7 7-7s5 2 5 6v3h-8c-2 0-4 1-3 3"/>
 <path d="M648.5 74.5h11M650 74.5c3 1 3 3 3 9M658 74.5c-3 1-3 3-3 9"/>
 <!-- row2 -->
 <circle cx="614" cy="97" r="2.5"/><circle cx="620" cy="97" r="2.5"/><path d="M617 91v12" stroke-dasharray="1.5 1"/>
 <path d="M630.5 92c3 2 3 4 3 10h5c0-6 0-8 3-10M636 91v11" />
 <path d="M648.5 91.5h11v11h-11zM651.5 94.5h5v5h-5z"/>
 <!-- row3 -->
 <path d="M612 111l4-2 6 5v7h-6l-4-6z"/>
 <path d="M630 117c0-4 3-8 7-8 3 0 4 2 5 4M633 116h8l-1.5-1.5M630 118c1 2 3 3 5 2"/>
 <path d="M650 109v12h9M650 112l9 9M652 117h3v3"/>
 <!-- row4 -->
 <path d="M611 134c1-4 5-6 9-5l3 2-4 6-4-2z"/>
 <circle cx="633" cy="135" r="3.5"/><path d="M634.5 127.5h7v7h-7z"/>
 <path d="M648.5 127.5h5M648.5 138.5h5M653.5 127.5l5 4-2 7M648.5 133h9"/>
 <!-- row5 -->
 <path d="M612 150c3-3 7-3 10-2v8c-3-1-6 0-9 3-1-3-1-6-1-9z"/>
 <circle cx="633" cy="154" r="3.5"/><path d="M635.5 146.5h7v7h-7z"/><path d="M633 152v2h2"/>
 <path d="M650 146c4 0 8 3 9 8l-2 4c-1-4-4-7-7-8z"/>
 <!-- row6 -->
 <path d="M612 165l5-2 5 2v3l-2 2 2 3v2l-5 2-5-2v-4l1-2z"/>
 <path d="M630.5 164.5h11v12h-11z"/><path d="M633 167h1M636 167h1M639 167h1M633 170h1M636 170h1M639 170h1M633 173h1M636 173h1M639 173h1" stroke="#707070"/>
 <path d="M649 165l4-1 6 6-1 6-3-1-1-6z"/>
 <!-- row7 -->
 <path d="M645 182.5H668" stroke="#a8a69e" stroke-dasharray="1 1.6"/>
 <path d="M631 185c2-2 4-1 5 0s4 1 5-1M630 193l3-5h10l-3 5zM632 192l3-2 3 1 3-2"/>
 <!-- col2 lower -->
 <path d="M632.5 201c0-2 8-2 8 0v9c0 2-8 2-8 0z"/><path d="M633 204l7-2M633 207l7-2M633 210l7-2"/>
 <path d="M630 220.5h10v10h-10M636 223v5l2-2.5z" />
 <circle cx="633" cy="245" r="3.5"/><path d="M634.5 238.5h6v6h-6z"/>
 <path d="M632.5 257.5h8v8h-8z" fill="#c8c6be"/>
 <path d="M630 275.5h9v9M632 277.5h5v8"/>
 <path d="M632.5 293.5h8v10h-8"/>
 <path d="M632 314l3-2h7v8l-2 2h-8z"/>
</g>
<g fill="none" stroke="#b8692a" stroke-width="1.2">
 <path d="M652 187.5l3 3M655 187.5l-3 3M648 194l3 3M651 194l-3 3M655 194l3 3M658 194l-3 3"/>
 <path d="M649.5 218l3-8h7.5l-3 8z"/>
 <path d="M656 225l-6 14" stroke-dasharray="2 1.4"/>
 <path d="M648 252c2-3 3-4 5-2s3 2 4 0 2-3 4-3"/>
 <path d="M648 270c2-4 4-4 6-2s3 1 5-2"/><path d="M657 266l3-3 1 1-3 3z" fill="#e8d040" stroke="#706020" stroke-width=".6"/><path d="M647.5 272.5h12" stroke="#3050c0" stroke-width=".8" stroke-dasharray="1 1"/>
 <path d="M650 283l8 8M658 283l-8 8M654 281v12"/><path d="M647 281l1 1M659 288l1 1M648 293l1 1" stroke="#606060" stroke-width=".8"/>
 <path d="M649 301v10h11" stroke="#e8d020"/><path d="M651 309l4-5 3 3 2-4" stroke="#2040c0"/>
 <path d="M648 322h12" stroke="#303030" stroke-width=".9"/><path d="M648.5 325.5h11v4h-11z" fill="#e8e070" stroke="#707030" stroke-width=".8"/><path d="M657 318l2 2" stroke="#d0b020"/>
 <path d="M652 336l1 1M655 337l1 1M654 340l1 1"/><path d="M648.5 342.5h11v4h-11z" fill="#e8e070" stroke="#707030" stroke-width=".8"/>
</g>
<path d="M664 193l2 2-2 2" stroke="#303030" stroke-width="1.2" fill="none"/>
</svg>

<!-- left strip -->
<div class="a" style="left:1px;top:137px;width:6px;height:76px;background:repeating-linear-gradient(135deg,#d6d3ca 0 1px,#b4b2aa 1px 2px)"></div>
<div class="a" style="left:1px;top:290px;width:6px;height:59px;background:repeating-linear-gradient(135deg,#d6d3ca 0 1px,#b4b2aa 1px 2px)"></div>
<div class="a" style="left:5px;top:64px;width:2px;height:73px;background:repeating-linear-gradient(#e8e6e0 0 1px,#c4c2ba 1px 2px)"></div>
<div class="a" style="left:7px;top:218px;width:2px;height:72px;background:repeating-linear-gradient(#d6d3ca 0 1px,#9a98a0 1px 2px)"></div>
<div class="a" style="left:4px;top:349px;width:1px;height:81px;background:#e6e4de"></div>
<svg class="a" style="left:0;top:160px" width="12" height="170" viewBox="0 160 12 170">
 <g fill="none" stroke="#2030c0" stroke-width="1.2">
 <path d="M2 173l2 2-2 2M2 180.5l2 2-2 2M5 214l2 2-2 2M5 277l2 2-2 2M2 309.5l2 2-2 2M2 317l2 2-2 2"/>
 </g>
</svg>

<!-- bottom dashboard -->
<div class="a" style="left:0;top:446px;width:669px;height:1px;background:#9e9c94"></div>
<div class="a" style="left:0;top:447px;width:669px;height:1px;background:#f2f1ec"></div>
<div class="a" style="left:18.5px;top:432px;width:21px;height:13.5px;background:#e6e4dc;border:1px solid #b4b2aa;border-right-color:#f0efea;border-bottom-color:#f0efea;border-radius:1.5px"></div>
<div class="a" style="left:9.5px;top:448px;width:17px;height:18.5px;background:#e6e4dc;border:1px solid #a8a69e;border-right-color:#f4f4f0;border-bottom-color:#f4f4f0;border-radius:1.5px"></div>
<svg class="a" style="left:0;top:430px" width="669" height="70" viewBox="0 430 669 70">
 <path d="M5.5 445.5v-6c0-3 2-5 5-5.5 3 .5 6 3 6.5 6v5.5z" fill="#eeede8" stroke="#c8c6be" stroke-width=".6"/>
 <path d="M10 435.3c3 .3 5 2.5 5.5 5.5" fill="none" stroke="#48d4ee" stroke-width="2.8"/>
 <path d="M15.5 441v4.5" stroke="#909088" stroke-width=".8"/>
 <g fill="#7cdcf2" stroke="#5cc4e0" stroke-width=".5">
  <path d="M12 452.5l3-1.5 3 3-3 1.5z"/><path d="M24 452l-3-1.5-3 3 3 1.5z"/><rect x="16.5" y="458.5" width="4" height="5"/>
  <circle cx="37.5" cy="456.5" r="2.2"/>
 </g>
 <path d="M16 455l2 3.5M21 455l-2 3.5" stroke="#58c0e0" stroke-width="1.2" fill="none"/>
 <path d="M30.5 453c2 2 4 3 7 3.5M44.5 453c-2 2-4 3-7 3.5M35 458.5v5M40 458.5v5M33 458h-2M42 458h2" stroke="#707068" stroke-width=".7" fill="none"/>
 <path d="M583 454h3v8h-3zM588 454h3v8h-3z" fill="#1840a8"/>
 <rect x="599.5" y="454.5" width="7" height="7" fill="#fff" stroke="#707070" stroke-width=".8"/>
 <path d="M601 458l1.5 1.5 3-3.5" fill="none" stroke="#20a020" stroke-width="1.2"/>
 <circle cx="611" cy="458.5" r="2.6" fill="none" stroke="#505050" stroke-width=".9"/><circle cx="618" cy="458.5" r="2.6" fill="none" stroke="#505050" stroke-width=".9"/><path d="M613.5 458h2M620.5 457.5l3-2" stroke="#a07040" stroke-width=".9"/>
 <path d="M631 457.5l3.5 3.5 7-7.5" fill="none" stroke="#10a020" stroke-width="2.4"/>
 <path d="M651 453l9.5 9M660.5 453l-9.5 9" fill="none" stroke="#e82020" stroke-width="2.3"/>
</svg>
<div class="t mono" style="left:20px;top:436px;font-weight:bold">Sets</div>
<div class="t mono" style="left:43.5px;top:436px;font-weight:bold">Transitions</div>
<div class="t mono" style="left:94px;top:436px;font-weight:bold;color:#b0aea6">Ambiguity</div>
<div class="t mono" style="left:136px;top:436px;font-weight:bold">Options</div>
<div class="t mono" style="left:170px;top:436px;font-weight:bold">Properties</div>
<div class="a sunk" style="left:52px;top:452px;width:56px;height:12px;background:#fff"><div class="dd"><svg width="9" height="9" style="position:absolute;left:1px;top:1px" viewBox="0 0 9 9"><path d="M2 3l2.5 2.5L7 3" fill="none" stroke="#4a4a4a" stroke-width="1.3"/></svg></div></div>
<div class="t mono" style="left:54px;top:455px">15.00</div>

<div class="a" style="left:0;top:468px;width:669px;height:1px;background:#9e9c94"></div>
<div class="a" style="left:0;top:469px;width:669px;height:18px;background:#e8e7e1"></div>
<div class="a" style="left:0;top:486px;width:669px;height:1px;background:#9e9c94"></div>
<div class="a" style="left:8px;top:478px;width:3.5px;height:3.5px;border-radius:50%;background:#0000e0"></div>
<div class="t" style="left:14px;top:475.5px;font-size:7.4px;color:#202020;transform-origin:0 0;transform:scaleX(.94)">Showing Surface loop chain.</div>
<div class="a raised" style="left:655px;top:470px;width:10px;height:8px;background:#d6d3ca"></div>
<div class="a raised" style="left:655px;top:478px;width:10px;height:8px;background:#d6d3ca"></div>
<svg class="a" style="left:655px;top:470px" width="10" height="16"><path d="M2.5 5.5l2.5-2.5 2.5 2.5M2.5 10.5l2.5 2.5 2.5-2.5" fill="none" stroke="#000" stroke-width="1.3"/></svg>
<div class="a" style="left:467px;top:487px;width:1px;height:13px;background:#9e9c94"></div>
<div class="a" style="left:468px;top:487px;width:1px;height:13px;background:#f0efea"></div>
<div class="t" style="left:0px;top:491px;font-size:7.4px;color:#202020;transform-origin:0 0;transform:scaleX(.95)">Delete the Set.</div>
<div class="a sunk" style="left:531px;top:489px;width:115px;height:12px;background:#fff"><div class="dd"><svg width="9" height="9" style="position:absolute;left:1px;top:1px" viewBox="0 0 9 9"><path d="M2 3l2.5 2.5L7 3" fill="none" stroke="#4a4a4a" stroke-width="1.3"/></svg></div></div>
<div class="t mono" style="left:535px;top:492px">All</div>

<!-- dialog panel -->
<div class="a" style="left:18px;top:219px;width:149px;height:211px;background:#d6d3ca"></div>
<div class="a sunk" style="left:24px;top:225px;width:43px;height:74px;background:#fff;border-color:#8a8880 #e8e6e0 #e8e6e0 #8a8880"></div>
<div class="t mono" style="left:26px;top:227px;color:#000">Set 1</div>
<div class="a" style="left:25px;top:235px;width:41px;height:9px;background:#3565c8"></div>
<div class="t mono" style="left:26px;top:236px;color:#fff">Set 2</div>

<div class="a sunk" style="left:73px;top:225px;width:88px;height:12px;background:#fff"><div class="dd"><svg width="9" height="9" style="position:absolute;left:1px;top:1px" viewBox="0 0 9 9"><path d="M2 3l2.5 2.5L7 3" fill="none" stroke="#4a4a4a" stroke-width="1.3"/></svg></div></div>
<div class="t mono" style="left:76px;top:228.5px">Circular</div>
<div class="a sunk" style="left:73px;top:241px;width:88px;height:12px;background:#e6e4dc"><div class="dd" style="opacity:.45"><svg width="9" height="9" style="position:absolute;left:1px;top:1px" viewBox="0 0 9 9"><path d="M2 3l2.5 2.5L7 3" fill="none" stroke="#4a4a4a" stroke-width="1.3"/></svg></div></div>
<div class="a sunk" style="left:73px;top:255px;width:88px;height:12px;background:#fff"><div class="dd"><svg width="9" height="9" style="position:absolute;left:1px;top:1px" viewBox="0 0 9 9"><path d="M2 3l2.5 2.5L7 3" fill="none" stroke="#4a4a4a" stroke-width="1.3"/></svg></div></div>
<div class="t mono" style="left:76px;top:258px">Rolling Ball</div>
<div class="a" style="left:73px;top:271px;width:88px;height:13px;background:#d8d5cc;border:1px solid #c2bfb6;border-radius:2px"></div>
<div class="t mono" style="left:97px;top:274.5px;color:#aaa8a0">Full Round</div>
<div class="a" style="left:73px;top:287px;width:88px;height:12px;background:#dad7ce;border:1px solid #a6a39a;border-radius:2px"></div>
<div class="t mono" style="left:91px;top:290.5px;color:#000">Through Curve</div>

<div class="t mono" style="left:24px;top:303px">References</div>
<div class="a sunk" style="left:24px;top:310px;width:137px;height:29px;background:#ffffe2;border-color:#b0aea4"></div>
<div class="t mono" style="left:34px;top:314px">Edge:F17(DRAFT)</div>
<div class="t mono" style="left:24px;top:344px;color:#aaa8a0">Spine</div>
<div class="a" style="left:24px;top:351px;width:137px;height:10px;background:#e6e4dc;border:1px solid #bcbab0"></div>
<div class="t mono" style="left:34px;top:353px;color:#aaa8a0">Edge:F17(DRAFT)</div>

<div class="a sunk" style="left:24px;top:366px;width:137px;height:46px;background:#fff"></div>
<div class="a" style="left:25px;top:367px;width:135px;height:9px;background:#d6d3ca;border-bottom:1px solid #a09e96"></div>
<div class="a" style="left:45px;top:367px;width:1px;height:9px;background:#a09e96"></div>
<div class="a" style="left:100px;top:367px;width:1px;height:9px;background:#a09e96"></div>
<div class="a" style="left:45px;top:376px;width:1px;height:11px;background:#e4e2da"></div>
<div class="a" style="left:25px;top:386px;width:76px;height:1px;background:#e4e2da"></div>
<div class="a" style="left:100px;top:376px;width:1px;height:11px;background:#e4e2da"></div>
<div class="t mono" style="left:26px;top:369px;font-weight:bold">#</div>
<div class="t mono" style="left:47px;top:369px">Radius</div>
<div class="t mono" style="left:26px;top:379px">1</div>
<div class="t mono" style="left:47px;top:379px">15.00</div>

<div class="a" style="left:24px;top:414px;width:18px;height:12px;background:#d6d3ca;border:1px solid #aaa8a0"></div>
<div class="t mono" style="left:32px;top:417.5px">1</div>
<div class="a sunk" style="left:43px;top:414px;width:56px;height:12px;background:#fff"><div class="dd"><svg width="9" height="9" style="position:absolute;left:1px;top:1px" viewBox="0 0 9 9"><path d="M2 3l2.5 2.5L7 3" fill="none" stroke="#4a4a4a" stroke-width="1.3"/></svg></div></div>
<div class="t mono" style="left:45px;top:417.5px">Value</div>
<div class="a sunk" style="left:103px;top:414px;width:56px;height:12px;background:#e6e4dc"><div class="dd" style="opacity:.45"><svg width="9" height="9" style="position:absolute;left:1px;top:1px" viewBox="0 0 9 9"><path d="M2 3l2.5 2.5L7 3" fill="none" stroke="#4a4a4a" stroke-width="1.3"/></svg></div></div>
<div class="t mono" style="left:105px;top:417.5px;color:#aaa8a0">Ratio</div>

<!-- context menu -->
<div class="a raised" style="left:42px;top:238px;width:46px;height:25px;background:#d6d3ca;border-color:#fff #7a7870 #7a7870 #fff"></div>
<div class="t" style="left:55px;top:241px;font-size:7.2px;color:#202020">Add</div>
<div class="a" style="left:43px;top:251px;width:44px;height:11px;background:#3163c5"></div>
<div class="t" style="left:55px;top:254px;font-size:7.2px;color:#fff">Delete</div>
<!-- red ellipse -->
<svg class="a" style="left:0;top:200px" width="120" height="100" viewBox="0 200 120 100">
 <defs><filter id="bl" x="-20%" y="-20%" width="140%" height="140%"><feGaussianBlur stdDeviation="1.3"/></filter></defs>
 <ellipse cx="58.2" cy="251" rx="34" ry="24" fill="none" stroke="#000" stroke-opacity=".3" stroke-width="4" transform="translate(1.5 3)" filter="url(#bl)"/>
 <ellipse cx="58.2" cy="251" rx="34" ry="24" fill="none" stroke="#f20d0d" stroke-width="5"/>
 <path d="M54.5 259.5v11l2.5-2.5 2 4.5 1.8-.8-2-4.3h3.5z" fill="#fff" stroke="#000" stroke-width=".8"/>
</svg>

</body></html>
